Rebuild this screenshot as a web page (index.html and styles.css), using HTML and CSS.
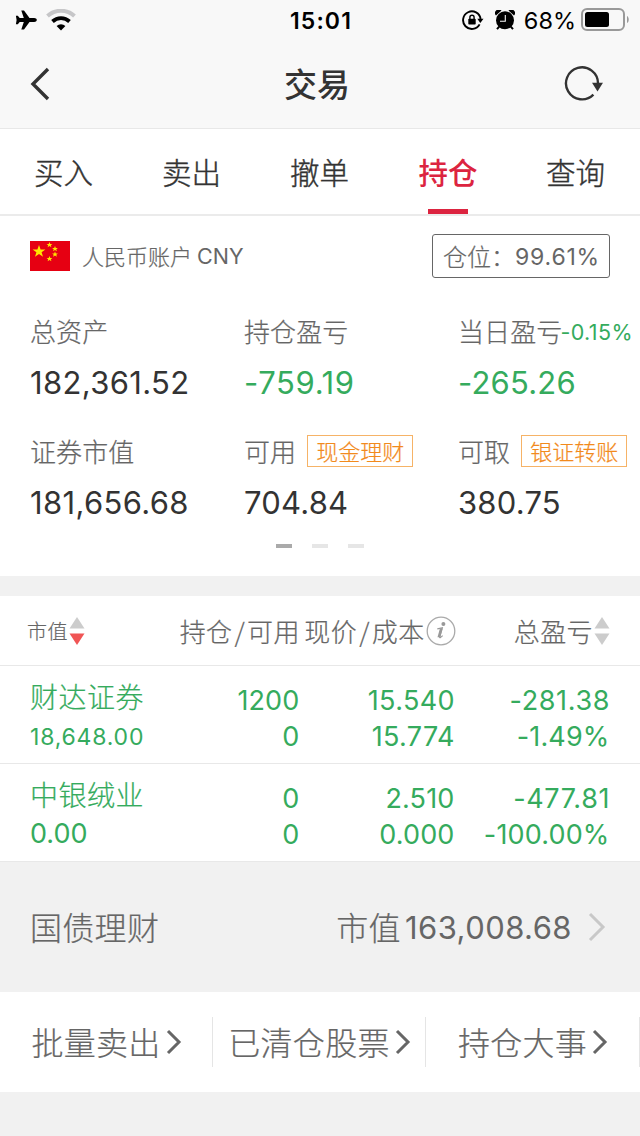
FILE: index.html
```html
<!DOCTYPE html>
<html lang="zh-CN">
<head>
<meta charset="utf-8">
<title>交易</title>
<link rel="stylesheet" href="styles.css">
</head>
<body>
<header class="top">
  <div class="status">
    <div class="status-left">
      <svg width="22" height="20" viewBox="0 0 22 20"><path d="M21.800 10c0-1.200-1.300-1.900-2.600-1.900h-4.700L9 .600H6.300l2.500 7.500H4.700L2.800 5.800H.900L1.600 10l-.7 4.200h1.900l1.900-2.300h4.100l-2.500 7.500H9l5.500-7.500h4.700c1.300 0 2.600-.7 2.600-1.900z"/></svg>
      <svg class="wifi" width="30" height="22" viewBox="0 0 30 22"><path d="M1.500 7a20 20 0 0 1 27 0" fill="none" stroke="#c6c6c8" stroke-width="4"/><path d="M6.500 12.500a12.500 12.500 0 0 1 17 0" fill="none" stroke="#000" stroke-width="3.800"/><path d="M10.600 17a6.500 6.500 0 0 1 8.800 0L15 21.500z"/></svg>
    </div>
    <div class="clock">15:01</div>
    <div class="status-right">
      <svg width="22" height="20" viewBox="0 0 22 20"><path d="M17.600 14.400A8.800 8.800 0 1 1 18.600 9" fill="none" stroke="#000" stroke-width="1.900"/><path d="M15.300 8.800h6.200l-3.200 4.200z"/><rect x="6.300" y="8.800" width="7.400" height="5.800" rx=".8"/><path d="M7.900 9V7.400a2.100 2.100 0 0 1 4.200 0V9" fill="none" stroke="#000" stroke-width="1.400"/></svg>
      <svg class="alarm" width="20" height="20" viewBox="0 0 20 20"><circle cx="10" cy="10.300" r="9"/><path d="M1 5.500A3.200 3.200 0 0 1 6.500.6zM19 5.500A3.200 3.200 0 0 0 13.500.6z"/><path d="M4.200 16.600l-2.200 2.600M15.800 16.600l2.200 2.600" stroke="#000" stroke-width="2"/><path d="M10.300 5v6.300H5" fill="none" stroke="#f8f8f8" stroke-width="1.100"/></svg>
      <span class="percent">68%</span>
      <svg class="battery" width="49" height="24" viewBox="0 0 49 24"><rect x="1" y="1" width="42" height="21" rx="5" fill="none" stroke="#999" stroke-width="2"/><rect x="4" y="4" width="24" height="15" rx="2.500"/><path d="M46 8c2.300 1 2.300 6 0 7z" fill="#999"/></svg>
    </div>
  </div>
  <div class="nav">
    <svg width="20" height="34" viewBox="0 0 20 34"><path d="M18 2L3 17l15 15" fill="none" stroke="#333" stroke-width="3.400"/></svg>
    <h1>交易</h1>
    <svg class="refresh" width="40" height="36" viewBox="0 0 40 36"><path d="M29.400 28.600A16 16 0 1 1 34 17.300" fill="none" stroke="#333" stroke-width="2.400"/><path d="M28 16.800h11l-5.500 8.800z" fill="#333"/></svg>
  </div>
</header>
<nav class="tabs">
  <div class="tab">买入</div><div class="tab">卖出</div><div class="tab">撤单</div><div class="tab active">持仓</div><div class="tab">查询</div>
</nav>
<main>
  <section class="account">
    <svg width="40" height="30" viewBox="0 0 40 30"><rect width="40" height="30" fill="#e60012"/><g fill="#ffe600"><path d="M9 4l1.600 4.400h4.800l-3.800 2.800 1.400 4.600L9 13.100l-4 2.700 1.400-4.600-3.800-2.800h4.800z"/><path id="star" d="M19.500 1l.8 1.900h2.100l-1.600 1.300.6 2-1.900-1.100-1.900 1.100.6-2-1.600-1.300h2.100z"/><use href="#star" x="5.500" y="4"/><use href="#star" x="5.500" y="9.500"/><use href="#star" x="0" y="14"/></g></svg>
    <span class="account-name">人民币账户</span><span class="num currency">CNY</span>
    <div class="position"><span>仓位：</span><span class="num">99.61%</span></div>
  </section>
  <section class="metrics">
    <div class="metric"><div class="label">总资产</div><div class="num value wide">182,361.52</div></div>
    <div class="metric"><div class="label">持仓盈亏</div><div class="num value green wider">-759.19</div></div>
    <div class="metric"><div class="label">当日盈亏<span class="num rate">-0.15%</span></div><div class="num value green">-265.26</div></div>
    <div class="metric"><div class="label">证券市值</div><div class="num value wide">181,656.68</div></div>
    <div class="metric"><div class="label">可用<span class="tag">现金理财</span></div><div class="num value">704.84</div></div>
    <div class="metric"><div class="label">可取<span class="tag">银证转账</span></div><div class="num value">380.75</div></div>
  </section>
  <div class="pager"><i class="on"></i><i></i><i></i></div>
  <section class="holdings">
    <div class="row head">
      <div class="h-value">市值<svg width="16" height="30" viewBox="0 0 16 30"><path d="M8 1l7.500 11.500H.5z" fill="#ccc"/><path d="M8 29L.5 17.500h15z" fill="#f05555"/></svg></div>
      <div class="h-qty">持仓<b>/</b>可用</div>
      <div class="h-price">现价<b>/</b>成本<svg width="30" height="30" viewBox="0 0 30 30"><circle cx="15" cy="15" r="13.800" fill="none" stroke="#aaa" stroke-width="1.300"/><circle cx="17.400" cy="8" r="2" fill="#999"/><path d="M11.300 12.900l5-1-2.600 9c-.3 1.200.9 1 2.900-1.200" fill="none" stroke="#999" stroke-width="1.200"/><path d="M13.900 12.500h2.800l-2.400 8.800h-2.800z" fill="#999"/></svg></div>
      <div class="h-total">总盈亏<svg width="16" height="30" viewBox="0 0 16 30"><path d="M8 1l7.500 11.500H.5z" fill="#ccc"/><path d="M8 29L.5 17.500h15z" fill="#ccc"/></svg></div>
    </div>
    <div class="row item">
      <div class="stock"><div class="name">财达证券</div><div class="num small">18,648.00</div></div>
      <div class="num pair"><div>1200</div><div>0</div></div>
      <div class="num pair"><div class="wide">15.540</div><div class="wide">15.774</div></div>
      <div class="num pair"><div class="wider">-281.38</div><div>-1.49%</div></div>
    </div>
    <div class="row item">
      <div class="stock"><div class="name">中银绒业</div><div class="num big">0.00</div></div>
      <div class="num pair"><div>0</div><div>0</div></div>
      <div class="num pair"><div>2.510</div><div>0.000</div></div>
      <div class="num pair"><div class="wider">-477.81</div><div>-100.00%</div></div>
    </div>
  </section>
  <section class="bond">
    <span>国债理财</span>
    <div class="bond-value"><span>市值</span><span class="num">163,008.68</span><svg width="18" height="30" viewBox="0 0 18 30"><path d="M2 2l13 13L2 28" fill="none" stroke="#c8c8c8" stroke-width="3"/></svg></div>
  </section>
  <section class="actions">
    <div class="action"><span>批量卖出</span><svg width="16" height="26" viewBox="0 0 16 26"><path d="M2 2l11 11L2 24" fill="none" stroke="#666" stroke-width="3"/></svg></div>
    <div class="action"><span>已清仓股票</span><svg width="16" height="26" viewBox="0 0 16 26"><path d="M2 2l11 11L2 24" fill="none" stroke="#666" stroke-width="3"/></svg></div>
    <div class="action"><span>持仓大事</span><svg width="16" height="26" viewBox="0 0 16 26"><path d="M2 2l11 11L2 24" fill="none" stroke="#666" stroke-width="3"/></svg></div>
  </section>
</main>
</body>
</html>
```
FILE: styles.css
```css
* { box-sizing: border-box; }
body { margin: 0; width: 640px; height: 1136px; overflow: hidden; background: #f1f1f1; color: #666; font-family: "Noto Sans CJK SC", sans-serif; font-weight: 300; white-space: nowrap; -webkit-text-stroke: .22px currentColor; }
svg { display: block; flex: none; }
.num { font-family: Inter, sans-serif; font-weight: 385; -webkit-text-stroke: 0; }
.green { color: #35ab5d; }

.top { height: 129px; background: #f8f8f8; border-bottom: 1px solid #e8e8e8; color: #000; -webkit-text-stroke: 0; }
.status { height: 40px; display: grid; grid-template-columns: 1fr 66px 1fr; align-items: center; font-family: Inter, sans-serif; padding: 0 10px 0 15px; }
.status-left, .status-right { display: flex; align-items: center; height: 40px; }
.status-left { gap: 9px; }
.status-right { justify-content: flex-end; }
.clock { font-size: 23px; font-weight: 600; letter-spacing: 1.100px; margin-left: -3px; padding-top: 2px; text-align: center; }
.alarm { margin-left: 11px; }
.percent { font-size: 23.500px; font-weight: 400; margin-left: 9px; }
.battery { margin-left: 5px; }
.nav { height: 88px; display: grid; grid-template-columns: 1fr auto 1fr; align-items: center; padding: 0 36px 0 30px; }
.nav h1 { margin: 0; font-size: 33px; font-weight: 500; color: #333; line-height: 87px; height: 88px; }
.refresh { justify-self: end; }

.tabs { height: 87px; display: grid; grid-template-columns: repeat(5, 1fr); background: #fff; border-bottom: 2px solid #ebebeb; }
.tab { display: flex; flex-direction: column; align-items: center; font-size: 29.500px; line-height: 84px; height: 85px; color: #333; padding-right: 1px; -webkit-text-stroke-width: .4px; }
.tab.active { color: #dc2440; font-weight: 500; padding: 0; -webkit-text-stroke-width: 0; }
.tab.active::after { content: ""; width: 40px; height: 5px; background: #dc2440; margin-top: -4px; }

.account { height: 80px; background: #fff; display: flex; align-items: center; padding: 0 30px; font-size: 22px; line-height: 30px; }
.account-name { margin: 0 0 3px 12px; }
.currency { margin-left: 5px; font-size: 21.500px; }
.position { margin-left: auto; width: 178px; height: 44px; border: 1px solid #666; border-radius: 3px; display: flex; align-items: center; justify-content: space-between; padding: 0 10px 0 10px; font-size: 24px; }
.position .num { font-size: 23px; letter-spacing: .8px; margin-right: -.8px; padding-top: 1px; }

.metrics { height: 240px; padding: 11px 0 0 30px; background: #fff; display: grid; grid-template-columns: repeat(3, 214px); grid-template-rows: 120px 109px; }
.metric { padding-top: 6px; }
.label { height: 36px; display: flex; align-items: center; font-size: 26px; line-height: 36px; letter-spacing: .1px; }
.rate { font-size: 21.500px; color: #35ab5d; letter-spacing: .4px; margin-left: -2px; padding-top: 1px; }
.value { font-size: 31px; line-height: 40px; margin-top: 14px; color: #333; letter-spacing: .2px; }
.value.green { color: #35ab5d; }
.wide { letter-spacing: .35px; margin-right: -.35px; }
.wider { letter-spacing: .65px; margin-right: -.65px; }
.tag { margin-left: 11px; width: 106px; height: 32px; border: 1px solid #f6b367; color: #f28a1c; font-size: 22px; line-height: 28px; text-align: center; letter-spacing: 0; }
.pager { height: 40px; padding-top: 8px; background: #fff; display: flex; justify-content: center; gap: 20px; }
.pager i { width: 16px; height: 4px; background: #e6e6e6; }
.pager .on { background: #aaa; }

.holdings { margin-top: 20px; background: #fff; }
.row { border-bottom: 1px solid #e8e8e8; }
.head { height: 70px; display: flex; align-items: center; padding: 0 30px 0 27px; font-size: 26px; letter-spacing: .4px; }
.head > div { display: flex; align-items: center; height: 69px; line-height: 38px; }
.head b { font-weight: 300; margin: 0 2px; }
.h-value { font-size: 20px; width: 153px; }
.h-value svg { margin-left: 1px; }
.h-qty { width: 125px; }
.h-price { width: 210px; }
.h-total svg, .h-price svg { margin-left: 1px; }
.item { height: 98px; display: grid; grid-template-columns: 130px 139.500px 155px 155px; padding-left: 30px; color: #35ab5d; }
.stock .name { margin-top: 10px; font-size: 28px; line-height: 40px; letter-spacing: .5px; }
.stock .small { font-size: 23px; line-height: 43px; letter-spacing: .8px; }
.stock .big { font-size: 27px; line-height: 39px; }
.pair { text-align: right; font-size: 27px; line-height: 36px; padding-top: 17px; letter-spacing: .15px; }

.bond { height: 130px; display: flex; align-items: center; justify-content: space-between; padding: 0 34px 0 30px; font-size: 32px; letter-spacing: .3px; }
.bond > span, .bond-value > span:first-child { margin-bottom: 3px; }
.bond-value { display: flex; align-items: center; }
.bond-value .num { font-size: 31px; margin-left: 4px; letter-spacing: .45px; }
.bond-value svg { margin-left: 16px; }
.actions { height: 100px; background: #fff; display: grid; grid-template-columns: 213px 213px 214px; align-items: center; font-size: 32px; }
.action { height: 50px; display: flex; align-items: center; justify-content: center; border-right: 1px solid #e5e5e5; letter-spacing: .3px; padding-left: 1px; }
.action span { margin-bottom: 3px; }
.action svg { margin-left: 5px; }
```
